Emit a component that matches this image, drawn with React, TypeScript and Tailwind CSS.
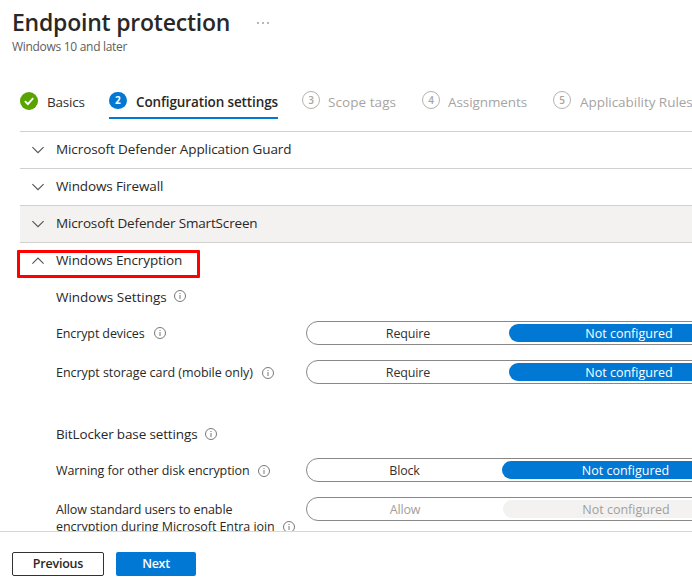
import clsx from "clsx";

function InfoIcon({ className }: { className?: string }) {
  return (
    <svg viewBox="0 0 12 12" className={clsx("h-3 w-3 shrink-0", className)} fill="none">
      <circle cx="6" cy="6" r="5.5" stroke="#6b6967" strokeWidth="0.9" />
      <path d="M6 5v4" stroke="#7a7876" strokeWidth="1" />
      <path d="M6 3v1" stroke="#7a7876" strokeWidth="1" />
    </svg>
  );
}

function Chevron({ open }: { open?: boolean }) {
  return (
    <svg viewBox="0 0 12 8" className="h-2 w-3 shrink-0" fill="none" stroke="#55534f" strokeWidth="1.1">
      {open ? <path d="M0.4 6.7 6 1.1l5.6 5.6" /> : <path d="M0.4 1.1 6 6.7l5.6-5.6" />}
    </svg>
  );
}

const upcomingSteps = [
  { number: 3, label: "Scope tags", width: "w-[120px]", tracking: "tracking-[0.06px]" },
  { number: 4, label: "Assignments", width: "w-[131px]", tracking: "tracking-[-0.08px]" },
  { number: 5, label: "Applicability Rules", width: "w-[141px]", tracking: "tracking-[-0.04px]" },
];

function Steps() {
  return (
    <div className="flex h-[34px] pl-5 text-[13.5px] leading-[22px] whitespace-nowrap">
      <div className="flex w-[89px] shrink-0 gap-[9px]">
        <svg viewBox="0 0 18 18" className="mt-[1.5px] h-[18px] w-[18px] shrink-0">
          <circle cx="9" cy="9" r="9" fill="#57a300" />
          <path d="m4.9 9.1 3 3 5.3-5.9" fill="none" stroke="#fff" strokeWidth="2" />
        </svg>
        <span className="pt-px tracking-[-0.2px] text-[#323130]">Basics</span>
      </div>
      <div className="mr-6 flex h-[29px] w-[169px] shrink-0 gap-[9.5px] border-b-2 border-[#0078d4]">
        <span className="mt-[1.5px] flex h-[17.5px] w-[17.5px] shrink-0 items-center justify-center rounded-full bg-[#0078d4] text-[10px] font-bold text-white">
          2
        </span>
        <span className="pt-px font-semibold tracking-[-0.12px] text-[#292827]">Configuration settings</span>
      </div>
      {upcomingSteps.map((step) => (
        <div key={step.number} className={clsx("flex shrink-0 gap-2 text-[#a6a4a2]", step.width)}>
          <span className="mt-px flex h-[18px] w-[18px] shrink-0 items-center justify-center rounded-full border border-[#b5b3b1] text-[10px] font-semibold">
            {step.number}
          </span>
          <span className={clsx("pt-px", step.number === 5 && "pl-px", step.tracking)}>{step.label}</span>
        </div>
      ))}
    </div>
  );
}

const sections = [
  { title: "Microsoft Defender Application Guard", tracking: "tracking-[-0.1px]" },
  { title: "Windows Firewall", tracking: "tracking-[-0.12px]" },
  { title: "Microsoft Defender SmartScreen", tracking: "tracking-[-0.16px]", hovered: true },
  { title: "Windows Encryption", tracking: "tracking-[-0.12px]", open: true },
];

function Toggle({ on, width, disabled }: { on: string; width: string; disabled?: boolean }) {
  return (
    <div
      className={clsx(
        "flex h-6 w-[446px] shrink-0 items-center rounded-full border border-[#8a8886] px-0.5 text-[12.5px] leading-5",
        disabled ? "text-[#a19f9d]" : "text-[#323130]"
      )}
    >
      <span className={clsx("h-[18px] shrink-0 pr-0.5 text-center tracking-[-0.15px]", width)}>{on}</span>
      <span
        className={clsx(
          "h-[18px] flex-1 rounded-full text-center",
          disabled ? "bg-[#f3f2f1]" : "bg-[#0078d4] text-white"
        )}
      >
        Not configured
      </span>
    </div>
  );
}

function Heading({ title, tracking, iconClass }: { title: string; tracking: string; iconClass: string }) {
  return (
    <div className="flex h-[22px] items-center pl-9 text-[13.5px] leading-[22px]">
      <span className={clsx("mr-[7px]", tracking)}>{title}</span>
      <InfoIcon className={iconClass} />
    </div>
  );
}

export default function App() {
  return (
    <div className="flex h-[580px] w-[692px] flex-col overflow-hidden bg-white font-['Open_Sans',sans-serif] text-[#292827]">
      <header className="h-[90px] shrink-0 pt-1.5 pl-3">
        <div className="flex h-8 items-center">
          <h1 className="w-[245px] text-[23px] leading-8 font-semibold tracking-[-0.22px] whitespace-nowrap">
            Endpoint protection
          </h1>
          <svg viewBox="0 0 12 2" className="mt-px h-0.5 w-3" fill="#605e5c">
            <circle cx="1" cy="1" r="0.8" />
            <circle cx="6" cy="1" r="0.8" />
            <circle cx="11" cy="1" r="0.8" />
          </svg>
        </div>
        <p className="pt-px text-[12px] leading-4 tracking-[-0.3px] text-[#605e5c]">Windows 10 and later</p>
      </header>

      <Steps />

      <main className="min-h-0 flex-1 overflow-hidden pt-[7px] pl-5">
        {sections.map((section) => (
          <div
            key={section.title}
            className={clsx(
              "relative flex h-[37px] items-center border-t border-[#d2d0ce] pl-3 text-[13.5px]",
              section.hovered && "bg-[#f3f2f1]"
            )}
          >
            <Chevron open={section.open} />
            <span className={clsx("ml-3 pb-0.5", section.tracking)}>{section.title}</span>
            {section.open && (
              <div className="absolute top-[7px] -left-[3px] h-7 w-[183px] rounded-[1px] border-3 border-[#fe0000]" />
            )}
          </div>
        ))}

        <div className="h-[7px]" />
        <Heading title="Windows Settings" tracking="tracking-[-0.02px]" iconClass="-mt-0.5" />

        <div className="mt-[13px] flex flex-col gap-[15px] pl-9 text-[12.5px] whitespace-nowrap">
          <div className="flex">
            <div className="flex h-6 w-[250px] shrink-0 items-center gap-[9px]">
              <span className="pt-0.5 tracking-[-0.12px]">Encrypt devices</span>
              <InfoIcon />
            </div>
            <Toggle on="Require" width="w-[200px]" />
          </div>
          <div className="flex">
            <div className="flex h-6 w-[250px] shrink-0 items-center gap-[9px]">
              <span className="pt-0.5 tracking-[-0.05px]">Encrypt storage card (mobile only)</span>
              <InfoIcon className="mt-0.5" />
            </div>
            <Toggle on="Require" width="w-[200px]" />
          </div>
        </div>

        <div className="mt-[39px]">
          <Heading title="BitLocker base settings" tracking="tracking-[-0.14px]" iconClass="ml-[0.5px]" />
        </div>

        <div className="mt-[13px] flex flex-col gap-[15px] pl-9 text-[12.5px] whitespace-nowrap">
          <div className="flex">
            <div className="flex h-6 w-[250px] shrink-0 items-center gap-2">
              <span className="pt-0.5 tracking-[-0.08px]">Warning for other disk encryption</span>
              <InfoIcon className="mt-0.5" />
            </div>
            <Toggle on="Block" width="w-[193px]" />
          </div>
          <div className="flex h-6">
            <div className="w-[250px] shrink-0 pt-1 leading-[17px]">
              <div className="tracking-[-0.12px]">Allow standard users to enable</div>
              <div className="flex items-center gap-2">
                <span className="tracking-[-0.07px]">encryption during Microsoft Entra join</span>
                <InfoIcon className="mt-px" />
              </div>
            </div>
            <Toggle on="Allow" width="w-[194px]" disabled />
          </div>
        </div>
      </main>

      <footer className="flex h-[49px] shrink-0 gap-3 border-t border-[#d9d7d5] pt-5 pl-3 text-[12.5px] leading-[22px] font-semibold">
        <button className="h-6 w-[92px] rounded-xs border border-[#323130] text-center tracking-[-0.2px]">
          Previous
        </button>
        <button className="h-6 w-20 rounded-xs bg-[#0078d4] text-center tracking-[-0.3px] text-white">Next</button>
      </footer>
    </div>
  );
}
